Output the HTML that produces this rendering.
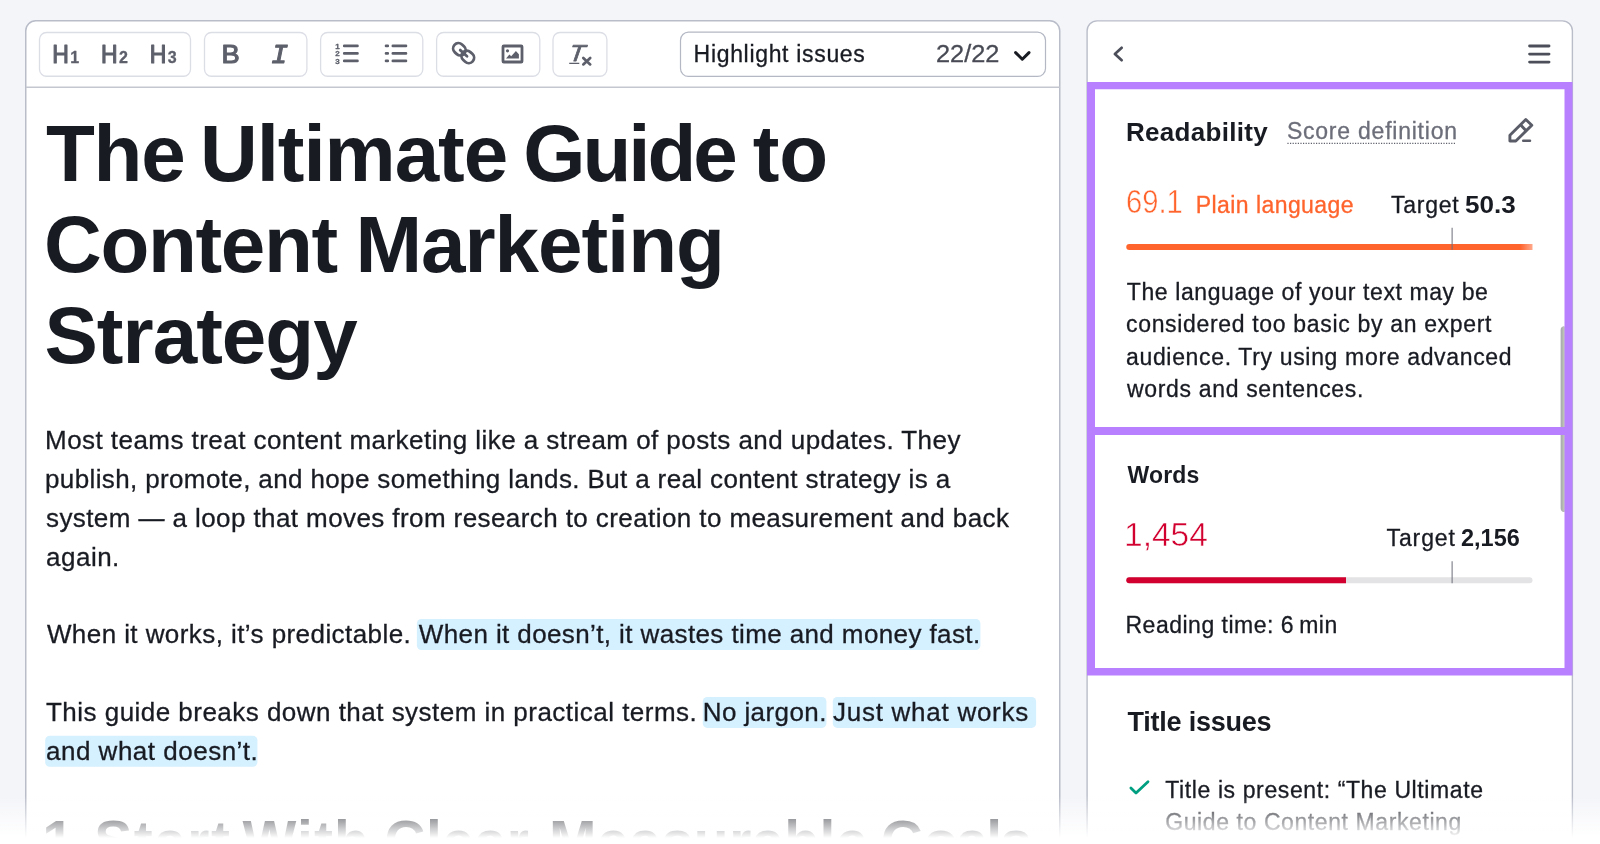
<!DOCTYPE html>
<html lang="en">
<head>
<meta charset="utf-8">
<title>Content editor</title>
<style>
html,body{margin:0;padding:0}
html{width:1600px;height:844px;overflow:hidden}
h1,h2,p{margin:0;font:inherit}
mark{background:none}
body{width:1600px;height:844px;overflow:hidden;background:#f4f5f9;position:relative;font-family:"Liberation Sans",sans-serif}
#bg{position:absolute;left:0;top:0;width:1600px;height:844px;display:block;will-change:transform}
#txt{position:absolute;left:0;top:0;width:1600px;height:844px;overflow:hidden;will-change:transform}
.t{position:absolute;white-space:nowrap;line-height:40px;font-family:"Liberation Sans",sans-serif;font-weight:400}
#fade{position:absolute;left:0;top:780px;width:1600px;height:64px;background:linear-gradient(to bottom,rgba(255,255,255,0) 15px,#fff 58px,#fff 64px)}

.s{-webkit-text-stroke:.3px}
#sc,#wc{-webkit-text-stroke:.55px #fff}
svg text{font-family:"Liberation Sans",sans-serif}
</style>
</head>
<body>
<svg id="bg" width="1600" height="844" viewBox="0 0 1600 844">
<defs>
<linearGradient id="og" x1="0" x2="1" y1="0" y2="0"><stop offset="0" stop-color="#ff642d"/><stop offset=".97" stop-color="#ff642d"/><stop offset="1" stop-color="#ffa98c"/></linearGradient>
</defs>
<!-- editor card -->
<rect x="25.75" y="20.75" width="1034" height="900" rx="10" fill="#fff" stroke="#b9bdc9" stroke-width="1.5"/>
<line x1="26" y1="87.25" x2="1060" y2="87.25" stroke="#c4c7cf" stroke-width="1.5"/>
<!-- toolbar groups -->
<g fill="#fff" stroke="#dcdee6" stroke-width="1.3">
<rect x="39.5" y="32.5" width="151" height="43.75" rx="7"/>
<rect x="204.5" y="32.5" width="102.4" height="43.75" rx="7"/>
<rect x="320.6" y="32.5" width="102.2" height="43.75" rx="7"/>
<rect x="436.6" y="32.5" width="103.2" height="43.75" rx="7"/>
<rect x="553" y="32.5" width="53.9" height="43.75" rx="7"/>
</g>
<rect x="680.5" y="32.2" width="365" height="44.2" rx="8" fill="#fff" stroke="#b4b8c4" stroke-width="1.2"/>
<!-- heading icons -->
<g fill="#5d606b" stroke="#5d606b" stroke-linejoin="round" stroke-linecap="round">
<text transform="translate(52.2 62.9) scale(.885 1)" font-size="26" stroke-width="1.15">H</text>
<text x="70.2" y="63.2" font-size="16" font-weight="700" stroke-width=".3">1</text>
<text transform="translate(101.1 62.9) scale(.885 1)" font-size="26" stroke-width="1.15">H</text>
<text x="119.1" y="63.2" font-size="16" font-weight="700" stroke-width=".3">2</text>
<text transform="translate(149.8 62.9) scale(.885 1)" font-size="26" stroke-width="1.15">H</text>
<text x="167.8" y="63.2" font-size="16" font-weight="700" stroke-width=".3">3</text>
<text transform="translate(221.6 62.9) scale(1.05 1)" font-size="26" stroke-width="1.1">B</text>
<text transform="translate(270.9 62.8)" font-size="28.5" font-style="italic" style="font-family:'Liberation Mono',monospace" stroke-width="1.05">I</text>
<text x="335.3" y="48.6" font-size="8" font-weight="700" stroke-width=".3">1</text>
<text x="335.3" y="56.1" font-size="8" font-weight="700" stroke-width=".3">2</text>
<text x="335.3" y="63.6" font-size="8" font-weight="700" stroke-width=".3">3</text>
</g>
<g fill="none" stroke="#5d606b" stroke-width="2.6" stroke-linecap="round" stroke-linejoin="round">
<path d="M344.2 45.9H357.5M344.2 53.4H357.5M344.2 60.9H357.5"/>
<path d="M386 45.9H387.8M386 53.4H387.8M386 60.9H387.8M392.8 45.9H406M392.8 53.4H406M392.8 60.9H406"/>
<!-- link -->
<g stroke-width="2.8">
<rect x="-6.6" y="-5.3" width="13.2" height="10.6" rx="5.3" transform="translate(459.4 49.3) rotate(42)"/>
<rect x="-6.6" y="-5.3" width="13.2" height="10.6" rx="5.3" transform="translate(467.8 56.9) rotate(42)"/>
<path d="M460.2 50.1L467 56.2"/>
</g>
<!-- image -->
<rect x="503" y="46" width="19" height="16" rx=".8" stroke-width="2.8"/>
</g>
<circle cx="507.5" cy="50.8" r="1.6" fill="#5d606b"/>
<path d="M506 58.5L509.4 54.6L511.2 56.3L515.9 51.1L518.9 54.3V58.5Z" fill="#5d606b"/>
<!-- clear format -->
<g fill="none" stroke="#5d606b" stroke-linecap="round">
<text transform="translate(568.6 61) scale(1.1 1) skewX(-7)" font-size="23" font-style="italic" fill="#5d606b" stroke-width=".8" stroke-linejoin="round">T</text>
<path d="M569.2 63.35H579.3" stroke-width="1.25" stroke-linecap="butt"/>
<path d="M583.3 57.9L590.2 64.4M590.2 57.9L583.3 64.4" stroke-width="2.7"/>
</g>
<path d="M1015.6 52.6L1022.3 59.2L1029 52.6" fill="none" stroke="#191b23" stroke-width="3" stroke-linecap="round" stroke-linejoin="round"/>
<!-- sidebar card -->
<rect x="1087.1" y="20.85" width="485.3" height="900" rx="10" fill="#fff" stroke="#b9bdc9" stroke-width="1.4"/>
<path d="M1121.7 47.8L1114.9 54L1121.7 60.2" fill="none" stroke="#4c4f5a" stroke-width="2.7" stroke-linecap="round" stroke-linejoin="round"/>
<path d="M1529.6 46H1549M1529.6 54.1H1549M1529.6 62.1H1549" fill="none" stroke="#4c4f5a" stroke-width="2.9" stroke-linecap="round"/>
<!-- scrollbar thumb -->
<path d="M1560.6 330.2Q1560.6 326.3 1564.5 326.3V511.9Q1560.6 511.9 1560.6 508Z" fill="#acadb0"/>
<rect x="1562.6" y="327" width="2" height="184.5" fill="#bcc2b4"/>
<!-- purple frames -->
<path fill="#b880ff" fill-rule="evenodd" d="M1087 82H1572.5V675.5H1087ZM1095 89.2V427H1564.5V89.2ZM1095 435V668.1H1564.5V435Z"/>
<!-- pencil -->
<g fill="none" stroke="#5a5d68" stroke-width="2.9" stroke-linejoin="round" stroke-linecap="round">
<path d="M1509.9 141V135.2L1525.8 119.5L1531.8 125.2L1515.8 141Z"/>
<path d="M1521.2 125.5L1525.4 129.9"/>
<path d="M1523.2 140.8H1530" stroke-width="2.5"/>
</g>
<path d="M1287.4 143.4H1455.8" stroke="#5f626d" stroke-width="1.3" stroke-dasharray="1.2 1.4" fill="none"/>
<!-- readability bar -->
<path d="M1129.25 244H1532.5V250H1129.25A3 3 0 0 1 1129.25 244Z" fill="url(#og)"/>
<rect x="1451.6" y="227.75" width="1" height="22" fill="#6c6e79"/>
<!-- words bar -->
<rect x="1126.25" y="577.25" width="406.25" height="6" rx="3" fill="#e3e3e5"/>
<path d="M1129.25 577.25H1346V583.25H1129.25A3 3 0 0 1 1129.25 577.25Z" fill="#d1002f"/>
<rect x="1451.6" y="561.25" width="1" height="22" fill="#6c6e79"/>
<!-- check -->
<path d="M1130.9 788L1136 793L1148 781.7" fill="none" stroke="#009f81" stroke-width="2.8" stroke-linecap="round" stroke-linejoin="round"/>
<!-- highlights -->
<g fill="#d5f0ff">
<rect x="416.9" y="619" width="563.5" height="31" rx="4.5"/>
<rect x="702.8" y="696.9" width="123.6" height="31" rx="4.5"/>
<rect x="832.8" y="696.9" width="203.3" height="31" rx="4.5"/>
<rect x="45.2" y="735.8" width="212.2" height="31" rx="4.5"/>
</g>
</svg>
<main id="txt">
<div class="toolbar">
<span class="t s" id="dd1" style="left:693.60px;top:33.90px;font-size:23px;letter-spacing:0.677px;color:#191b23">Highlight issues</span>
<span class="t s" id="dd2" style="left:935.80px;top:34.20px;font-size:23px;transform:scaleX(1.1018);transform-origin:0 0;color:#484a54">22/22</span>
</div>
<article>
<h1>
<span class="t" id="h1a" style="left:46.00px;top:133.60px;font-size:80px;font-weight:700;letter-spacing:-1.250px;color:#191b23">The</span>
<span class="t" id="h1a2" style="left:200.00px;top:133.60px;font-size:80px;font-weight:700;letter-spacing:-1.071px;color:#191b23">Ultimate</span>
<span class="t" id="h1a3" style="left:523.25px;top:133.60px;font-size:80px;font-weight:700;letter-spacing:-3.062px;color:#191b23">Guide</span>
<span class="t" id="h1a4" style="left:752.75px;top:133.60px;font-size:80px;font-weight:700;letter-spacing:-0.050px;color:#191b23">to</span>
<span class="t" id="h1b" style="left:44.00px;top:224.80px;font-size:80px;font-weight:700;letter-spacing:-1.333px;color:#191b23">Content</span>
<span class="t" id="h1b2" style="left:355.50px;top:224.80px;font-size:80px;font-weight:700;letter-spacing:-1.050px;color:#191b23">Marketing</span>
<span class="t" id="h1c" style="left:44.50px;top:316.00px;font-size:80px;font-weight:700;letter-spacing:-1.000px;color:#191b23">Strategy</span>
</h1>
<p>
<span class="t s" id="p1a" style="left:45.10px;top:420.10px;font-size:26px;letter-spacing:0.443px;color:#191b23">Most teams treat content marketing like a stream of posts and updates. They</span>
<span class="t s" id="p1b" style="left:45.00px;top:459.00px;font-size:26px;letter-spacing:0.371px;color:#191b23">publish, promote, and hope something lands. But a real content strategy is a</span>
<span class="t s" id="p1c" style="left:46.00px;top:497.90px;font-size:26px;letter-spacing:0.411px;color:#191b23">system — a loop that moves from research to creation to measurement and back</span>
<span class="t s" id="p1d" style="left:46.00px;top:536.80px;font-size:26px;letter-spacing:0.500px;color:#191b23">again.</span>
</p>
<p>
<span class="t s" id="p2a" style="left:46.90px;top:614.00px;font-size:26px;letter-spacing:0.426px;color:#191b23">When it works, it’s predictable.</span>
<mark class="t s" id="p2b" style="left:418.80px;top:614.00px;font-size:26px;letter-spacing:0.391px;color:#191b23">When it doesn’t, it wastes time and money fast.</mark>
</p>
<p>
<span class="t s" id="p3a" style="left:46.00px;top:691.90px;font-size:26px;letter-spacing:0.472px;color:#191b23">This guide breaks down that system in practical terms.</span>
<mark class="t s" id="p3b" style="left:702.75px;top:691.90px;font-size:26px;letter-spacing:0.406px;color:#191b23">No jargon.</mark>
<mark class="t s" id="p3c" style="left:833.00px;top:691.90px;font-size:26px;letter-spacing:0.736px;color:#191b23">Just what works</mark>
<mark class="t s" id="p3d" style="left:46.00px;top:730.70px;font-size:26px;letter-spacing:0.500px;color:#191b23">and what doesn’t.</mark>
</p>
<h2>
<span class="t" id="h2a" style="left:42.25px;top:820.70px;font-size:57px;font-weight:700;letter-spacing:-6.250px;color:#191b23">1.</span>
<span class="t" id="h2b" style="left:94.25px;top:820.70px;font-size:57px;font-weight:700;letter-spacing:1.438px;color:#191b23">Start</span>
<span class="t" id="h2c" style="left:242.50px;top:820.70px;font-size:57px;font-weight:700;letter-spacing:1.167px;color:#191b23">With</span>
<span class="t" id="h2d" style="left:384.25px;top:820.70px;font-size:57px;font-weight:700;letter-spacing:0.550px;color:#191b23">Clear,</span>
<span class="t" id="h2e" style="left:549.00px;top:820.70px;font-size:57px;font-weight:700;letter-spacing:0.556px;color:#191b23">Measurable</span>
<span class="t" id="h2f" style="left:880.70px;top:820.70px;font-size:57px;font-weight:700;letter-spacing:-1.800px;color:#191b23">Goals</span>
</h2>
</article>
<aside>
<section>
<span class="t" id="rd" style="left:1126.00px;top:112.25px;font-size:26px;font-weight:700;letter-spacing:0.300px;color:#191b23">Readability</span>
<span class="t s" id="sd" style="left:1286.90px;top:110.85px;font-size:23px;letter-spacing:0.773px;color:#6c6e79">Score definition</span>
<span class="t" id="sc" style="left:1125.76px;top:182.00px;font-size:33.5px;transform:scaleX(0.8710);transform-origin:0 0;color:#ff642d">69.1</span>
<span class="t s" id="pl" style="left:1195.75px;top:185.00px;font-size:23px;letter-spacing:0.435px;color:#ff642d">Plain language</span>
<span class="t s" id="t1" style="left:1390.90px;top:184.50px;font-size:23px;letter-spacing:0.770px;color:#191b23">Target</span>
<b class="t" id="t1b" style="left:1465.12px;top:184.50px;font-size:23px;font-weight:700;transform:scaleX(1.1337);transform-origin:0 0;color:#191b23">50.3</b>
<span class="t s" id="d1" style="left:1126.80px;top:271.60px;font-size:23px;letter-spacing:0.594px;color:#191b23">The language of your text may be</span>
<span class="t s" id="d2" style="left:1126.00px;top:304.40px;font-size:23px;letter-spacing:0.672px;color:#191b23">considered too basic by an expert</span>
<span class="t s" id="d3" style="left:1126.00px;top:336.90px;font-size:23px;letter-spacing:0.663px;color:#191b23">audience. Try using more advanced</span>
<span class="t s" id="d4" style="left:1127.00px;top:369.40px;font-size:23px;letter-spacing:0.663px;color:#191b23">words and sentences.</span>
</section>
<section>
<span class="t" id="wd" style="left:1127.50px;top:455.30px;font-size:23px;font-weight:700;letter-spacing:0.175px;color:#191b23">Words</span>
<span class="t" id="wc" style="left:1124.00px;top:514.90px;font-size:33.5px;transform:scaleX(1.0000);transform-origin:0 0;color:#d1002f">1,454</span>
<span class="t s" id="t2" style="left:1386.50px;top:517.60px;font-size:23px;letter-spacing:0.900px;color:#191b23">Target</span>
<b class="t" id="t2b" style="left:1461.23px;top:517.60px;font-size:23px;font-weight:700;transform:scaleX(1.0205);transform-origin:0 0;color:#191b23">2,156</b>
<span class="t s" id="rt" style="left:1125.50px;top:605.40px;font-size:23px;letter-spacing:0.500px;color:#191b23">Reading time: 6 min</span>
</section>
<section>
<span class="t" id="ti" style="left:1127.50px;top:702.25px;font-size:27px;font-weight:700;letter-spacing:-0.227px;color:#191b23">Title issues</span>
<span class="t s" id="tp1" style="left:1165.25px;top:770.00px;font-size:23px;letter-spacing:0.608px;color:#191b23">Title is present: “The Ultimate</span>
<span class="t s" id="tp2" style="left:1165.25px;top:802.00px;font-size:23px;letter-spacing:0.590px;color:#191b23">Guide to Content Marketing</span>
</section>
</aside>
</main>
<div id="fade"></div>
</body>
</html>
